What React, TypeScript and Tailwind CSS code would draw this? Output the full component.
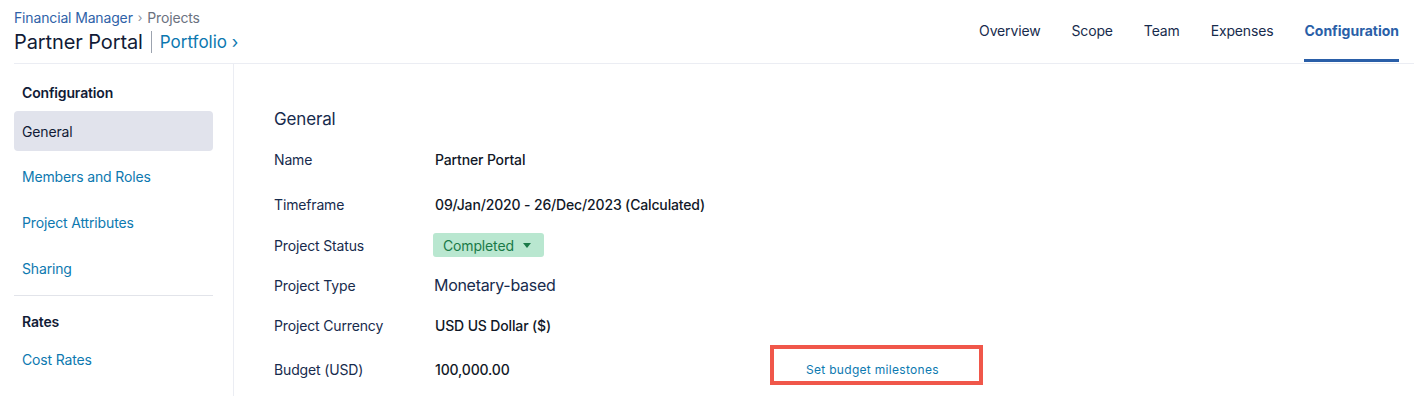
import React from "react";

export default function App() {
  return (
    <div
      className="w-[1414px] h-[396px] bg-white overflow-hidden text-[#172b4d] tracking-[-0.15px]"
      style={{ fontFamily: "Inter, 'Noto Sans', sans-serif" }}
    >
      {/* Header */}
      <div className="ml-[14px] h-[64px] border-b border-[#ebedf3] flex justify-between items-stretch pr-[15px]">
        <div className="flex flex-col pt-[9px]">
          <div className="flex items-center text-[14px] leading-[18px]">
            <span className="text-[#2f62a8]">Financial Manager</span>
            <span className="text-[#8a8f9c] mx-[5px] text-[12px]">›</span>
            <span className="text-[#6b7280]">Projects</span>
          </div>
          <div className="flex items-center mt-[3px]">
            <span className="text-[20px] leading-[24px] text-[#111b36] tracking-[-0.1px]">Partner Portal</span>
            <span className="w-px h-[22px] bg-[#9ca3af] mx-[8px]"></span>
            <span className="text-[17px] leading-[24px] text-[#0c78b0] tracking-normal">Portfolio ›</span>
          </div>
        </div>
        <nav className="flex gap-[31px] text-[14px]">
          {["Overview", "Scope", "Team", "Expenses"].map((t) => (
            <div key={t} className="flex items-start pt-[20px] text-[#172b4d]">
              {t}
            </div>
          ))}
          <div className="flex items-start pt-[20px] font-bold tracking-normal text-[#2a5fa8] border-b-[3px] border-[#2a5fa8] mb-[1px]">
            Configuration
          </div>
        </nav>
      </div>

      <div className="flex h-[332px]">
        {/* Sidebar */}
        <aside className="w-[234px] border-r border-[#ebedf3] pl-[14px] pr-[20px] pt-[20px] text-[14px]">
          <div className="px-[8px] font-semibold text-[#111b36] leading-[18px]">Configuration</div>
          <div className="mt-[9px] h-[40px] rounded-[4px] bg-[#e1e3ec] px-[8px] flex items-center text-[#111b36]">
            General
          </div>
          {["Members and Roles", "Project Attributes", "Sharing"].map((t, i) => (
            <div
              key={t}
              className={`px-[8px] text-[#0d79b0] leading-[18px] ${i === 0 ? "mt-[17px]" : "mt-[28px]"}`}
            >
              {t}
            </div>
          ))}
          <div className="mt-[17px] border-t border-[#e2e4ea]"></div>
          <div className="mt-[17px] px-[8px] font-semibold text-[#111b36] leading-[18px]">Rates</div>
          <div className="mt-[20px] px-[8px] text-[#0d79b0] leading-[18px]">Cost Rates</div>
        </aside>

        {/* Main */}
        <main className="flex-1 pl-[40px] pt-[44px]">
          <div className="text-[17px] leading-[22px] text-[#172b4d]">General</div>
          <div className="text-[14px]">
            <div className="flex items-center h-[18px] mt-[20px]">
              <div className="w-[161px]">Name</div>
              <div className="font-medium text-[#111827]">Partner Portal</div>
            </div>
            <div className="flex items-center h-[18px] mt-[27px]">
              <div className="w-[161px]">Timeframe</div>
              <div className="font-medium text-[#111827]">09/Jan/2020 - 26/Dec/2023 (Calculated)</div>
            </div>
            <div className="flex items-center h-[24px] mt-[20px]">
              <div className="w-[159px]">Project Status</div>
              <div className="h-[24px] w-[111px] rounded-[3px] bg-[#b9e7d0] text-[#1a7a48] flex items-center pl-[10px]">
                Completed
                <svg width="8" height="5" viewBox="0 0 8 5" className="ml-[9px]">
                  <path d="M0 0 L8 0 L4 5 Z" fill="#1a7a48" />
                </svg>
              </div>
            </div>
            <div className="flex items-center h-[20px] mt-[18px]">
              <div className="w-[160px]">Project Type</div>
              <div className="text-[16px] text-[#172b4d] tracking-[-0.3px]">Monetary-based</div>
            </div>
            <div className="flex items-center h-[18px] mt-[21px]">
              <div className="w-[161px]">Project Currency</div>
              <div className="font-medium text-[#111827]">USD US Dollar ($)</div>
            </div>
            <div className="flex items-start h-[40px] mt-[11px]">
              <div className="w-[161px] mt-[16px] leading-[18px]">Budget (USD)</div>
              <div className="w-[335px] mt-[16px] leading-[18px] font-medium text-[#111827]">100,000.00</div>
              <div className="h-[40px] w-[213px] border-[4px] border-[#f0574a] pl-[32px] pt-[13px] leading-[15px] text-[12px] tracking-[0.3px] text-[#0d79b0]">
                Set budget milestones
              </div>
            </div>
          </div>
        </main>
      </div>
    </div>
  );
}
